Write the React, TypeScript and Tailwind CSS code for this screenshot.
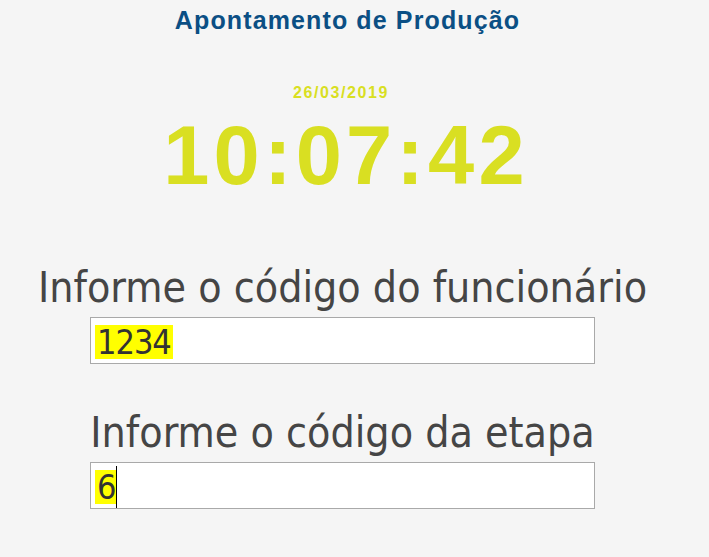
import React from 'react';

const labelFont = { fontFamily: '"DejaVu Sans Condensed", "DejaVu Sans", sans-serif' };

function CodeField({ label, value, caret = false }: { label: string; value: string; caret?: boolean }) {
  return (
    <div className="w-[505px] ml-[90px]">
      {/* rótulo centralizado sobre o campo */}
      <div
        className="flex justify-center whitespace-nowrap text-[42.5px] leading-[48px] text-[#454545]"
        style={labelFont}
      >
        {label}
      </div>
      <div className="mt-[5px] h-[47px] border border-[#a9a9a9] bg-white flex items-center pl-[4px] pt-[3px]">
        <span
          className="text-[34px] leading-[34px] text-[#333] bg-[#ffff00] px-[2px] tracking-[-1px]"
          style={labelFont}
        >
          {value}
        </span>
        {caret && <span className="w-px h-[42px] bg-black -ml-[1px]" />}
      </div>
    </div>
  );
}

export default function App() {
  return (
    <div className="min-h-[557px] w-[709px] bg-[#f5f5f5] overflow-hidden">
      <div className="w-[692px] flex flex-col">
        <h1
          className="pt-[5px] pl-[3px] text-center text-[25px] leading-[30px] font-bold text-[#0b4f84] tracking-[0.045em]"
          style={{ fontFamily: '"Liberation Sans", Arial, sans-serif' }}
        >
          Apontamento de Produção
        </h1>

        <div
          className="mt-[48px] pr-[10px] text-center text-[16px] leading-[20px] font-bold text-[#d9df22] tracking-[0.1em]"
          style={{ fontFamily: '"Liberation Sans", Arial, sans-serif' }}
        >
          26/03/2019
        </div>
        <div
          className="mt-[11px] text-center text-[83px] leading-[83px] font-bold text-[#d9df22] tracking-[0.05em]"
          style={{ fontFamily: '"Liberation Sans", Arial, sans-serif' }}
        >
          10:07:42
        </div>

        <div className="mt-[67px]">
          <CodeField label="Informe o código do funcionário" value="1234" />
        </div>
        <div className="mt-[45px]">
          <CodeField label="Informe o código da etapa" value="6" caret />
        </div>
      </div>
    </div>
  );
}
